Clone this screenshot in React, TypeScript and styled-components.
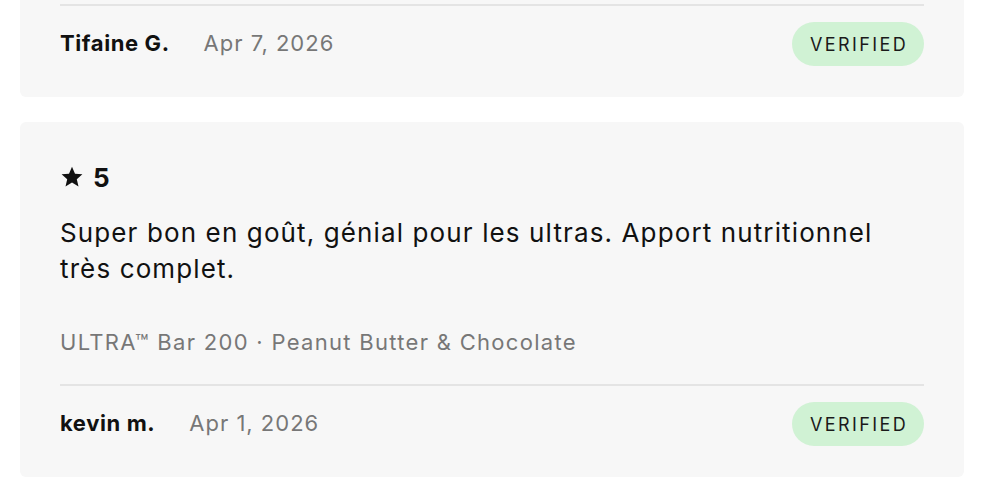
import styled, { createGlobalStyle } from "styled-components";

const GlobalStyle = createGlobalStyle`
  * { box-sizing: border-box; }
  body {
    margin: 0;
    background: #fff;
    font-family: Inter, "Liberation Sans", sans-serif;
    color: #111;
  }
`;

type Review = {
  rating?: number;
  text?: string;
  product?: string;
  name: string;
  date: string;
  cropped?: boolean;
};

const reviews: Review[] = [
  { name: "Tifaine G.", date: "Apr 7, 2026", cropped: true },
  {
    rating: 5,
    text: "Super bon en goût, génial pour les ultras. Apport nutritionnel très complet.",
    product: "ULTRA™ Bar 200 · Peanut Butter & Chocolate",
    name: "kevin m.",
    date: "Apr 1, 2026",
  },
];

function Star() {
  return (
    <svg width="24" height="24" viewBox="0 0 24 24" aria-hidden="true">
      <path
        d="M12 1.8l3 6.9 7.4.6-5.6 4.9 1.7 7.3L12 17.6l-6.5 3.9 1.7-7.3-5.6-4.9 7.4-.6z"
        fill="#111"
      />
    </svg>
  );
}

function ReviewCard({ review }: { review: Review }) {
  return (
    <Card $cropped={review.cropped}>
      {review.rating !== undefined && (
        <Rating>
          <Star />
          <span>{review.rating}</span>
        </Rating>
      )}
      {review.text && <Body>{review.text}</Body>}
      {review.product && <Product>{review.product}</Product>}
      <Footer>
        <Author>
          <Name>{review.name}</Name>
          <DateText>{review.date}</DateText>
        </Author>
        <Badge>VERIFIED</Badge>
      </Footer>
    </Card>
  );
}

export default function App() {
  return (
    <>
      <GlobalStyle />
      <List>
        {reviews.map((r) => (
          <ReviewCard key={r.name} review={r} />
        ))}
      </List>
    </>
  );
}

const List = styled.div`
  display: flex;
  flex-direction: column;
  gap: 25px;
  padding: 0 26px 0 20px;
`;

const Card = styled.div<{ $cropped?: boolean }>`
  background: #f7f7f7;
  border-radius: ${(p) => (p.$cropped ? "0 0 6px 6px" : "6px")};
  padding: ${(p) => (p.$cropped ? "4px" : "40px")} 40px 31px;
`;

const Rating = styled.div`
  display: flex;
  align-items: center;
  gap: 9px;
  height: 30px;
  font-size: 26px;
  font-weight: 700;
  letter-spacing: 0.5px;
`;

const Body = styled.p`
  margin: 23px 0 0;
  font-size: 26px;
  line-height: 36px;
  letter-spacing: 1.12px;
  color: #111;
`;

const Product = styled.div`
  margin-top: 40px;
  font-size: 22px;
  line-height: 30px;
  letter-spacing: 1.3px;
  color: #777;
`;

const Footer = styled.div`
  display: flex;
  align-items: center;
  justify-content: space-between;
  border-top: 2px solid #e4e4e4;
  padding-top: 16px;
  ${Product} + & {
    margin-top: 27px;
  }
`;

const Author = styled.div`
  display: flex;
  align-items: baseline;
  gap: 34px;
  margin-bottom: 3px;
`;

const Name = styled.span`
  font-size: 22px;
  font-weight: 700;
  letter-spacing: 0.6px;
  color: #111;
`;

const DateText = styled.span`
  font-size: 22px;
  letter-spacing: 1px;
  color: #777;
`;

const Badge = styled.span`
  display: inline-flex;
  align-items: center;
  justify-content: center;
  height: 44px;
  width: 132px;
  border-radius: 22px;
  background: #d0f2d4;
  color: #1a1a1a;
  font-size: 18px;
  letter-spacing: 2.4px;
  padding-left: 2px;
`;
